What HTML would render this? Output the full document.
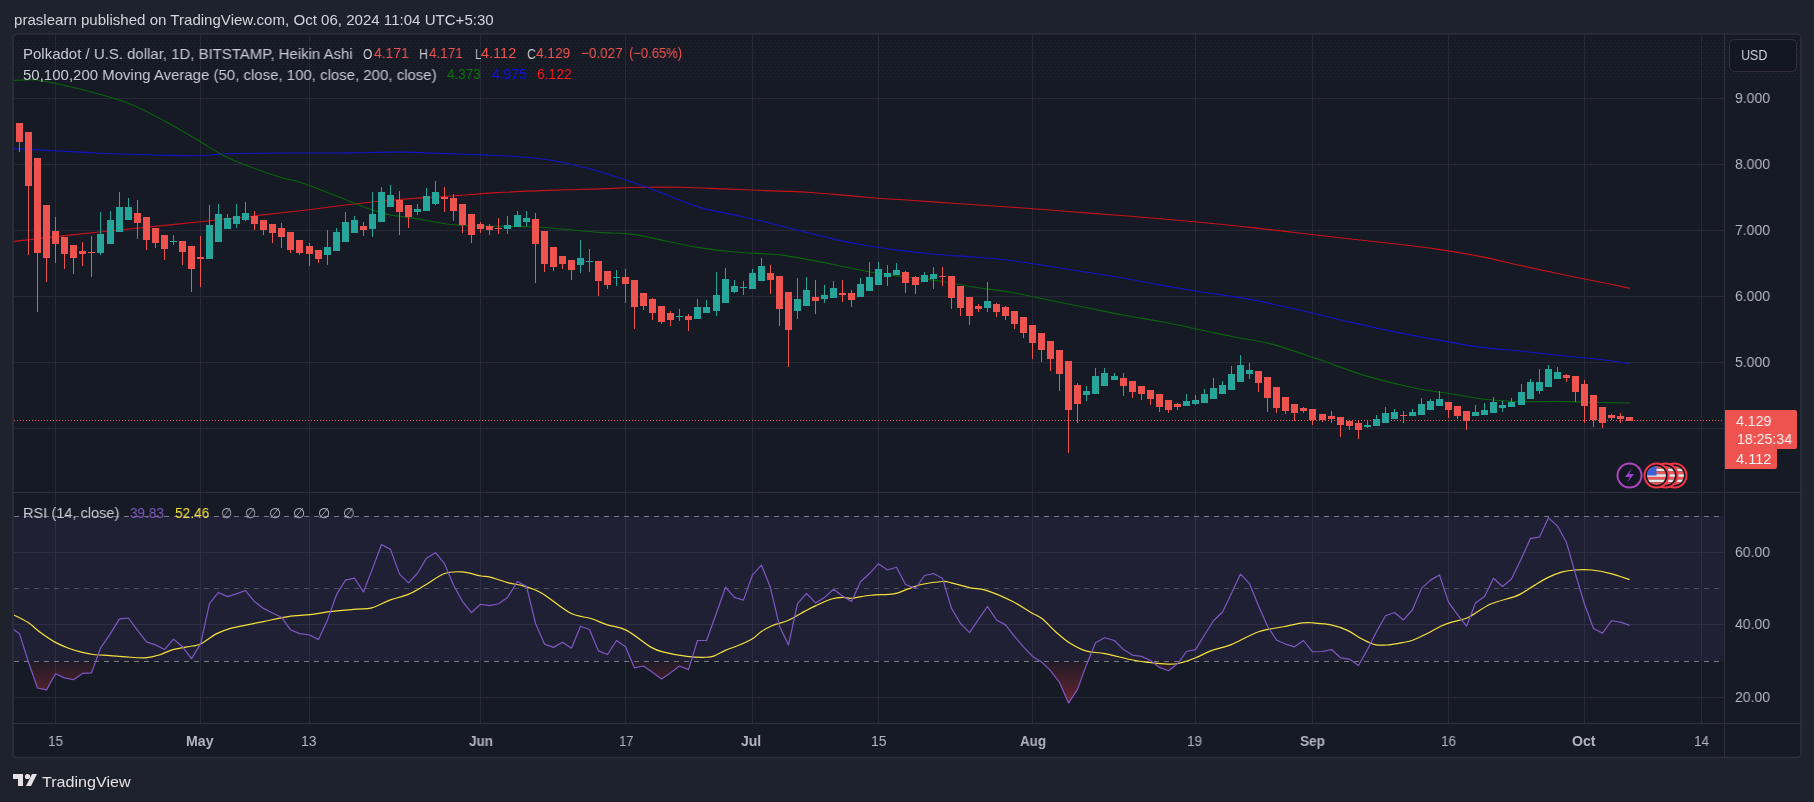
<!DOCTYPE html><html><head><meta charset="utf-8"><style>html,body{margin:0;padding:0;background:#1e222d;width:1814px;height:802px;overflow:hidden;}body{position:relative;font-family:"Liberation Sans",sans-serif;}.t{position:absolute;white-space:pre;line-height:1;transform-origin:0 0;will-change:transform;}svg{position:absolute;left:0;top:0;}</style></head><body><svg width="1814" height="802" viewBox="0 0 1814 802"><defs><clipPath id="mainclip"><rect x="14" y="35" width="1710" height="457"/></clipPath><clipPath id="rsiclip"><rect x="14" y="493" width="1710" height="230"/></clipPath><pattern id="dotp" width="4" height="6" patternUnits="userSpaceOnUse"><rect x="1" y="1" width="1" height="1" fill="#2a2d3b"/><rect x="3" y="4" width="1" height="1" fill="#2a2d3b"/></pattern></defs><rect x="13" y="33" width="1789" height="725" rx="3" fill="#161a25"/><rect x="14" y="35" width="1787" height="45" fill="url(#dotp)" opacity="0.6"/><rect x="55" y="35" width="1" height="688" fill="#272a36"/><rect x="200" y="35" width="1" height="688" fill="#272a36"/><rect x="309" y="35" width="1" height="688" fill="#272a36"/><rect x="480" y="35" width="1" height="688" fill="#272a36"/><rect x="625" y="35" width="1" height="688" fill="#272a36"/><rect x="752" y="35" width="1" height="688" fill="#272a36"/><rect x="878" y="35" width="1" height="688" fill="#272a36"/><rect x="1032" y="35" width="1" height="688" fill="#272a36"/><rect x="1195" y="35" width="1" height="688" fill="#272a36"/><rect x="1312" y="35" width="1" height="688" fill="#272a36"/><rect x="1448" y="35" width="1" height="688" fill="#272a36"/><rect x="1584" y="35" width="1" height="688" fill="#272a36"/><rect x="1701" y="35" width="1" height="688" fill="#272a36"/><rect x="14" y="98" width="1710" height="1" fill="#272a36"/><rect x="14" y="164" width="1710" height="1" fill="#272a36"/><rect x="14" y="230" width="1710" height="1" fill="#272a36"/><rect x="14" y="296" width="1710" height="1" fill="#272a36"/><rect x="14" y="362" width="1710" height="1" fill="#272a36"/><rect x="14" y="428" width="1710" height="1" fill="#272a36"/><rect x="14" y="552" width="1710" height="1" fill="#272a36"/><rect x="14" y="624" width="1710" height="1" fill="#272a36"/><rect x="14" y="697" width="1710" height="1" fill="#272a36"/><rect x="14" y="516" width="1710" height="145" fill="#7e57c2" fill-opacity="0.1"/><line x1="14" y1="516.5" x2="1724" y2="516.5" stroke="#787b86" stroke-width="1" stroke-dasharray="5 5"/><line x1="14" y1="588.5" x2="1724" y2="588.5" stroke="#787b86" stroke-opacity="0.5" stroke-width="1" stroke-dasharray="5 5"/><line x1="14" y1="661.5" x2="1724" y2="661.5" stroke="#787b86" stroke-width="1" stroke-dasharray="5 5"/><g clip-path="url(#mainclip)" fill="none" stroke-width="1.1"><path d="M13.00,241.50 C27.33,239.92 68.17,235.25 99.00,232.00 C129.83,228.75 164.50,225.53 198.00,222.00 C231.50,218.47 274.73,213.72 300.00,210.80 C325.27,207.88 333.10,206.38 349.60,204.50 C366.10,202.62 382.47,200.88 399.00,199.50 C415.53,198.12 432.23,197.35 448.80,196.20 C465.37,195.05 481.87,193.57 498.40,192.60 C514.93,191.63 531.07,191.02 548.00,190.40 C564.93,189.78 584.45,189.42 600.00,188.90 C615.55,188.38 627.52,187.57 641.30,187.30 C655.08,187.03 668.92,187.03 682.70,187.30 C696.48,187.57 710.22,188.35 724.00,188.90 C737.78,189.45 751.62,190.05 765.40,190.60 C779.18,191.15 792.93,191.37 806.70,192.20 C820.47,193.03 835.60,194.55 848.00,195.60 C860.40,196.65 872.43,197.85 881.10,198.50 C889.77,199.15 887.52,198.67 900.00,199.50 C912.48,200.33 937.30,202.22 956.00,203.50 C974.70,204.78 993.48,205.87 1012.20,207.20 C1030.92,208.53 1049.60,210.07 1068.30,211.50 C1087.00,212.93 1102.45,214.00 1124.40,215.80 C1146.35,217.60 1179.50,220.42 1200.00,222.30 C1220.50,224.18 1231.60,225.40 1247.40,227.10 C1263.20,228.80 1279.00,230.68 1294.80,232.50 C1310.60,234.32 1326.40,236.22 1342.20,238.00 C1358.00,239.78 1373.80,241.35 1389.60,243.20 C1405.40,245.05 1421.93,246.90 1437.00,249.10 C1452.07,251.30 1465.77,253.60 1480.00,256.40 C1494.23,259.20 1508.27,262.80 1522.40,265.90 C1536.53,269.00 1550.67,272.07 1564.80,275.00 C1578.93,277.93 1596.35,281.27 1607.20,283.50 C1618.05,285.73 1626.12,287.58 1629.90,288.40" stroke="#c8121a"/><path d="M13.00,148.60 C19.10,148.92 35.27,149.73 49.60,150.50 C63.93,151.27 82.43,152.50 99.00,153.20 C115.57,153.90 132.50,154.28 149.00,154.70 C165.50,155.12 184.25,155.90 198.00,155.70 C211.75,155.50 214.50,153.95 231.50,153.50 C248.50,153.05 280.32,153.10 300.00,153.00 C319.68,152.90 333.10,153.05 349.60,152.90 C366.10,152.75 382.47,151.98 399.00,152.10 C415.53,152.22 434.98,153.13 448.80,153.60 C462.62,154.07 470.87,154.42 481.90,154.90 C492.93,155.38 503.98,155.68 515.00,156.50 C526.02,157.32 538.35,158.42 548.00,159.80 C557.65,161.18 564.23,162.82 572.90,164.80 C581.57,166.78 589.98,168.78 600.00,171.70 C610.02,174.62 622.00,178.47 633.00,182.30 C644.00,186.13 654.97,190.57 666.00,194.70 C677.03,198.83 688.15,203.78 699.20,207.10 C710.25,210.42 721.27,212.12 732.30,214.60 C743.33,217.08 754.38,219.38 765.40,222.00 C776.42,224.62 787.38,227.53 798.40,230.30 C809.42,233.07 820.47,236.12 831.50,238.60 C842.53,241.08 853.18,243.23 864.60,245.20 C876.02,247.17 887.87,248.85 900.00,250.40 C912.13,251.95 924.93,253.40 937.40,254.50 C949.87,255.60 962.33,255.97 974.80,257.00 C987.27,258.03 999.73,259.15 1012.20,260.70 C1024.67,262.25 1037.13,264.37 1049.60,266.30 C1062.07,268.23 1074.53,270.30 1087.00,272.30 C1099.47,274.30 1111.93,276.12 1124.40,278.30 C1136.87,280.48 1149.20,283.15 1161.80,285.40 C1174.40,287.65 1185.73,289.55 1200.00,291.80 C1214.27,294.05 1231.60,296.03 1247.40,298.90 C1263.20,301.77 1279.00,305.45 1294.80,309.00 C1310.60,312.55 1326.40,316.55 1342.20,320.20 C1358.00,323.85 1373.80,327.62 1389.60,330.90 C1405.40,334.18 1421.93,337.20 1437.00,339.90 C1452.07,342.60 1465.77,345.20 1480.00,347.10 C1494.23,349.00 1508.27,349.82 1522.40,351.30 C1536.53,352.78 1550.67,354.52 1564.80,356.00 C1578.93,357.48 1596.35,358.87 1607.20,360.20 C1618.05,361.53 1626.12,363.37 1629.90,364.00" stroke="#1414c4"/><path d="M13.00,80.40 C16.33,80.27 28.33,79.55 33.00,79.60 C37.67,79.65 35.50,79.68 41.00,80.70 C46.50,81.72 56.33,83.48 66.00,85.70 C75.67,87.92 88.00,90.83 99.00,94.00 C110.00,97.17 121.00,100.15 132.00,104.70 C143.00,109.25 154.00,115.37 165.00,121.30 C176.00,127.23 188.33,134.65 198.00,140.30 C207.67,145.95 214.67,150.92 223.00,155.20 C231.33,159.48 238.33,162.28 248.00,166.00 C257.67,169.72 272.33,174.80 281.00,177.50 C289.67,180.20 291.33,179.35 300.00,182.20 C308.67,185.05 322.00,190.33 333.00,194.60 C344.00,198.87 356.90,204.50 366.00,207.80 C375.10,211.10 379.30,212.60 387.60,214.40 C395.90,216.20 405.60,216.95 415.80,218.60 C426.00,220.25 438.10,223.07 448.80,224.30 C459.50,225.53 466.22,225.58 480.00,226.00 C493.78,226.42 517.40,226.25 531.50,226.80 C545.60,227.35 553.18,228.37 564.60,229.30 C576.02,230.23 588.60,231.55 600.00,232.40 C611.40,233.25 622.00,232.97 633.00,234.40 C644.00,235.83 654.97,238.80 666.00,241.00 C677.03,243.20 688.15,245.80 699.20,247.60 C710.25,249.40 721.27,250.75 732.30,251.80 C743.33,252.85 757.13,253.35 765.40,253.90 C773.67,254.45 773.63,253.93 781.90,255.10 C790.17,256.27 803.98,258.83 815.00,260.90 C826.02,262.97 838.35,265.57 848.00,267.50 C857.65,269.43 864.23,271.03 872.90,272.50 C881.57,273.97 889.25,274.93 900.00,276.30 C910.75,277.67 924.93,278.87 937.40,280.70 C949.87,282.53 962.33,285.33 974.80,287.30 C987.27,289.27 999.73,290.33 1012.20,292.50 C1024.67,294.67 1037.13,297.75 1049.60,300.30 C1062.07,302.85 1074.53,305.30 1087.00,307.80 C1099.47,310.30 1111.93,312.97 1124.40,315.30 C1136.87,317.63 1149.20,319.40 1161.80,321.80 C1174.40,324.20 1187.72,327.12 1200.00,329.70 C1212.28,332.28 1223.67,334.93 1235.50,337.30 C1247.33,339.67 1257.17,340.23 1271.00,343.90 C1284.83,347.57 1302.68,353.97 1318.50,359.30 C1334.32,364.63 1350.10,371.17 1365.90,375.90 C1381.70,380.63 1397.50,384.47 1413.30,387.70 C1429.10,390.93 1448.85,393.37 1460.70,395.30 C1472.55,397.23 1474.12,398.25 1484.40,399.30 C1494.68,400.35 1509.00,401.22 1522.40,401.60 C1535.80,401.98 1550.67,401.43 1564.80,401.60 C1578.93,401.77 1596.35,402.37 1607.20,402.60 C1618.05,402.83 1626.12,402.93 1629.90,403.00" stroke="#0a650c"/></g><line x1="14" y1="420.5" x2="1726" y2="420.5" stroke="#ef5350" stroke-width="1" stroke-dasharray="1 2"/><g clip-path="url(#mainclip)"><rect x="19" y="123" width="1" height="29" fill="#ef5350"/><rect x="16" y="123" width="7" height="19" fill="#ef5350"/><rect x="28" y="132" width="1" height="123" fill="#ef5350"/><rect x="25" y="132" width="7" height="54" fill="#ef5350"/><rect x="37" y="158" width="1" height="154" fill="#ef5350"/><rect x="34" y="158" width="7" height="95" fill="#ef5350"/><rect x="46" y="205" width="1" height="77" fill="#ef5350"/><rect x="43" y="205" width="7" height="53" fill="#ef5350"/><rect x="55" y="217" width="1" height="46" fill="#ef5350"/><rect x="52" y="231" width="7" height="13" fill="#ef5350"/><rect x="64" y="237" width="1" height="32" fill="#ef5350"/><rect x="61" y="237" width="7" height="17" fill="#ef5350"/><rect x="73" y="245" width="1" height="29" fill="#ef5350"/><rect x="70" y="245" width="7" height="13" fill="#ef5350"/><rect x="82" y="242" width="1" height="24" fill="#ef5350"/><rect x="79" y="251" width="7" height="3" fill="#ef5350"/><rect x="91" y="236" width="1" height="41" fill="#ef5350"/><rect x="88" y="252" width="7" height="1" fill="#ef5350"/><rect x="100" y="212" width="1" height="43" fill="#26a69a"/><rect x="97" y="234" width="7" height="19" fill="#26a69a"/><rect x="110" y="211" width="1" height="33" fill="#26a69a"/><rect x="107" y="220" width="7" height="24" fill="#26a69a"/><rect x="119" y="192" width="1" height="40" fill="#26a69a"/><rect x="116" y="207" width="7" height="25" fill="#26a69a"/><rect x="128" y="198" width="1" height="22" fill="#26a69a"/><rect x="125" y="207" width="7" height="13" fill="#26a69a"/><rect x="137" y="200" width="1" height="39" fill="#ef5350"/><rect x="134" y="213" width="7" height="10" fill="#ef5350"/><rect x="146" y="217" width="1" height="33" fill="#ef5350"/><rect x="143" y="217" width="7" height="23" fill="#ef5350"/><rect x="155" y="228" width="1" height="20" fill="#ef5350"/><rect x="152" y="228" width="7" height="15" fill="#ef5350"/><rect x="164" y="235" width="1" height="25" fill="#ef5350"/><rect x="161" y="235" width="7" height="14" fill="#ef5350"/><rect x="173" y="235" width="1" height="10" fill="#26a69a"/><rect x="170" y="241" width="7" height="1" fill="#26a69a"/><rect x="182" y="241" width="1" height="24" fill="#ef5350"/><rect x="179" y="241" width="7" height="11" fill="#ef5350"/><rect x="191" y="246" width="1" height="46" fill="#ef5350"/><rect x="188" y="246" width="7" height="23" fill="#ef5350"/><rect x="200" y="236" width="1" height="51" fill="#ef5350"/><rect x="197" y="257" width="7" height="2" fill="#ef5350"/><rect x="209" y="205" width="1" height="54" fill="#26a69a"/><rect x="206" y="225" width="7" height="34" fill="#26a69a"/><rect x="218" y="204" width="1" height="38" fill="#26a69a"/><rect x="215" y="214" width="7" height="28" fill="#26a69a"/><rect x="227" y="214" width="1" height="15" fill="#26a69a"/><rect x="224" y="218" width="7" height="11" fill="#26a69a"/><rect x="236" y="204" width="1" height="24" fill="#26a69a"/><rect x="233" y="216" width="7" height="8" fill="#26a69a"/><rect x="245" y="202" width="1" height="19" fill="#26a69a"/><rect x="242" y="213" width="7" height="7" fill="#26a69a"/><rect x="254" y="211" width="1" height="19" fill="#ef5350"/><rect x="251" y="216" width="7" height="8" fill="#ef5350"/><rect x="263" y="220" width="1" height="15" fill="#ef5350"/><rect x="260" y="220" width="7" height="10" fill="#ef5350"/><rect x="272" y="224" width="1" height="19" fill="#ef5350"/><rect x="269" y="224" width="7" height="9" fill="#ef5350"/><rect x="281" y="223" width="1" height="25" fill="#ef5350"/><rect x="278" y="228" width="7" height="9" fill="#ef5350"/><rect x="290" y="232" width="1" height="21" fill="#ef5350"/><rect x="287" y="232" width="7" height="18" fill="#ef5350"/><rect x="299" y="240" width="1" height="15" fill="#ef5350"/><rect x="296" y="240" width="7" height="13" fill="#ef5350"/><rect x="309" y="243" width="1" height="23" fill="#ef5350"/><rect x="306" y="246" width="7" height="8" fill="#ef5350"/><rect x="318" y="250" width="1" height="13" fill="#ef5350"/><rect x="315" y="250" width="7" height="9" fill="#ef5350"/><rect x="327" y="230" width="1" height="35" fill="#26a69a"/><rect x="324" y="247" width="7" height="8" fill="#26a69a"/><rect x="336" y="228" width="1" height="23" fill="#26a69a"/><rect x="333" y="232" width="7" height="19" fill="#26a69a"/><rect x="345" y="212" width="1" height="30" fill="#26a69a"/><rect x="342" y="222" width="7" height="20" fill="#26a69a"/><rect x="354" y="216" width="1" height="17" fill="#26a69a"/><rect x="351" y="220" width="7" height="13" fill="#26a69a"/><rect x="363" y="222" width="1" height="14" fill="#ef5350"/><rect x="360" y="226" width="7" height="4" fill="#ef5350"/><rect x="372" y="192" width="1" height="45" fill="#26a69a"/><rect x="369" y="214" width="7" height="15" fill="#26a69a"/><rect x="381" y="187" width="1" height="35" fill="#26a69a"/><rect x="378" y="192" width="7" height="30" fill="#26a69a"/><rect x="390" y="185" width="1" height="22" fill="#26a69a"/><rect x="387" y="195" width="7" height="12" fill="#26a69a"/><rect x="399" y="191" width="1" height="44" fill="#ef5350"/><rect x="396" y="200" width="7" height="12" fill="#ef5350"/><rect x="408" y="205" width="1" height="23" fill="#ef5350"/><rect x="405" y="205" width="7" height="12" fill="#ef5350"/><rect x="417" y="204" width="1" height="11" fill="#26a69a"/><rect x="414" y="209" width="7" height="3" fill="#26a69a"/><rect x="426" y="188" width="1" height="23" fill="#26a69a"/><rect x="423" y="196" width="7" height="15" fill="#26a69a"/><rect x="435" y="181" width="1" height="24" fill="#26a69a"/><rect x="432" y="192" width="7" height="12" fill="#26a69a"/><rect x="444" y="187" width="1" height="25" fill="#ef5350"/><rect x="441" y="197" width="7" height="2" fill="#ef5350"/><rect x="453" y="194" width="1" height="27" fill="#ef5350"/><rect x="450" y="198" width="7" height="13" fill="#ef5350"/><rect x="462" y="204" width="1" height="29" fill="#ef5350"/><rect x="459" y="204" width="7" height="21" fill="#ef5350"/><rect x="471" y="214" width="1" height="29" fill="#ef5350"/><rect x="468" y="214" width="7" height="21" fill="#ef5350"/><rect x="480" y="222" width="1" height="11" fill="#ef5350"/><rect x="477" y="224" width="7" height="5" fill="#ef5350"/><rect x="489" y="224" width="1" height="11" fill="#ef5350"/><rect x="486" y="226" width="7" height="4" fill="#ef5350"/><rect x="498" y="218" width="1" height="16" fill="#ef5350"/><rect x="495" y="228" width="7" height="1" fill="#ef5350"/><rect x="507" y="216" width="1" height="18" fill="#26a69a"/><rect x="504" y="225" width="7" height="4" fill="#26a69a"/><rect x="517" y="211" width="1" height="16" fill="#26a69a"/><rect x="514" y="215" width="7" height="12" fill="#26a69a"/><rect x="526" y="211" width="1" height="15" fill="#26a69a"/><rect x="523" y="218" width="7" height="4" fill="#26a69a"/><rect x="535" y="213" width="1" height="70" fill="#ef5350"/><rect x="532" y="219" width="7" height="25" fill="#ef5350"/><rect x="544" y="231" width="1" height="41" fill="#ef5350"/><rect x="541" y="231" width="7" height="33" fill="#ef5350"/><rect x="553" y="247" width="1" height="24" fill="#ef5350"/><rect x="550" y="247" width="7" height="20" fill="#ef5350"/><rect x="562" y="256" width="1" height="13" fill="#ef5350"/><rect x="559" y="256" width="7" height="8" fill="#ef5350"/><rect x="571" y="260" width="1" height="20" fill="#ef5350"/><rect x="568" y="260" width="7" height="10" fill="#ef5350"/><rect x="580" y="240" width="1" height="33" fill="#26a69a"/><rect x="577" y="258" width="7" height="7" fill="#26a69a"/><rect x="589" y="249" width="1" height="23" fill="#26a69a"/><rect x="586" y="261" width="7" height="1" fill="#26a69a"/><rect x="598" y="261" width="1" height="35" fill="#ef5350"/><rect x="595" y="261" width="7" height="20" fill="#ef5350"/><rect x="607" y="271" width="1" height="18" fill="#ef5350"/><rect x="604" y="271" width="7" height="14" fill="#ef5350"/><rect x="616" y="270" width="1" height="16" fill="#26a69a"/><rect x="613" y="277" width="7" height="1" fill="#26a69a"/><rect x="625" y="269" width="1" height="34" fill="#ef5350"/><rect x="622" y="277" width="7" height="7" fill="#ef5350"/><rect x="634" y="280" width="1" height="49" fill="#ef5350"/><rect x="631" y="280" width="7" height="27" fill="#ef5350"/><rect x="643" y="293" width="1" height="17" fill="#ef5350"/><rect x="640" y="293" width="7" height="13" fill="#ef5350"/><rect x="652" y="298" width="1" height="22" fill="#ef5350"/><rect x="649" y="299" width="7" height="14" fill="#ef5350"/><rect x="661" y="306" width="1" height="18" fill="#ef5350"/><rect x="658" y="306" width="7" height="16" fill="#ef5350"/><rect x="670" y="311" width="1" height="15" fill="#ef5350"/><rect x="667" y="313" width="7" height="7" fill="#ef5350"/><rect x="679" y="309" width="1" height="12" fill="#26a69a"/><rect x="676" y="316" width="7" height="1" fill="#26a69a"/><rect x="688" y="314" width="1" height="17" fill="#ef5350"/><rect x="685" y="316" width="7" height="4" fill="#ef5350"/><rect x="697" y="299" width="1" height="20" fill="#26a69a"/><rect x="694" y="307" width="7" height="12" fill="#26a69a"/><rect x="706" y="300" width="1" height="13" fill="#26a69a"/><rect x="703" y="307" width="7" height="6" fill="#26a69a"/><rect x="716" y="272" width="1" height="44" fill="#26a69a"/><rect x="713" y="295" width="7" height="16" fill="#26a69a"/><rect x="725" y="268" width="1" height="35" fill="#26a69a"/><rect x="722" y="279" width="7" height="24" fill="#26a69a"/><rect x="734" y="280" width="1" height="13" fill="#26a69a"/><rect x="731" y="286" width="7" height="6" fill="#26a69a"/><rect x="743" y="281" width="1" height="14" fill="#26a69a"/><rect x="740" y="287" width="7" height="1" fill="#26a69a"/><rect x="752" y="269" width="1" height="20" fill="#26a69a"/><rect x="749" y="273" width="7" height="16" fill="#26a69a"/><rect x="761" y="258" width="1" height="23" fill="#26a69a"/><rect x="758" y="266" width="7" height="15" fill="#26a69a"/><rect x="770" y="265" width="1" height="29" fill="#ef5350"/><rect x="767" y="273" width="7" height="7" fill="#ef5350"/><rect x="779" y="276" width="1" height="50" fill="#ef5350"/><rect x="776" y="276" width="7" height="33" fill="#ef5350"/><rect x="788" y="292" width="1" height="75" fill="#ef5350"/><rect x="785" y="292" width="7" height="38" fill="#ef5350"/><rect x="797" y="278" width="1" height="41" fill="#26a69a"/><rect x="794" y="299" width="7" height="12" fill="#26a69a"/><rect x="806" y="277" width="1" height="29" fill="#26a69a"/><rect x="803" y="290" width="7" height="16" fill="#26a69a"/><rect x="815" y="280" width="1" height="34" fill="#ef5350"/><rect x="812" y="297" width="7" height="4" fill="#ef5350"/><rect x="824" y="285" width="1" height="18" fill="#26a69a"/><rect x="821" y="295" width="7" height="4" fill="#26a69a"/><rect x="833" y="281" width="1" height="17" fill="#26a69a"/><rect x="830" y="288" width="7" height="10" fill="#26a69a"/><rect x="842" y="280" width="1" height="22" fill="#ef5350"/><rect x="839" y="293" width="7" height="2" fill="#ef5350"/><rect x="851" y="290" width="1" height="17" fill="#ef5350"/><rect x="848" y="293" width="7" height="7" fill="#ef5350"/><rect x="860" y="278" width="1" height="19" fill="#26a69a"/><rect x="857" y="284" width="7" height="13" fill="#26a69a"/><rect x="869" y="262" width="1" height="29" fill="#26a69a"/><rect x="866" y="277" width="7" height="14" fill="#26a69a"/><rect x="878" y="262" width="1" height="23" fill="#26a69a"/><rect x="875" y="269" width="7" height="16" fill="#26a69a"/><rect x="887" y="265" width="1" height="21" fill="#26a69a"/><rect x="884" y="273" width="7" height="4" fill="#26a69a"/><rect x="896" y="263" width="1" height="12" fill="#26a69a"/><rect x="893" y="270" width="7" height="5" fill="#26a69a"/><rect x="905" y="271" width="1" height="22" fill="#ef5350"/><rect x="902" y="272" width="7" height="11" fill="#ef5350"/><rect x="915" y="276" width="1" height="18" fill="#ef5350"/><rect x="912" y="277" width="7" height="8" fill="#ef5350"/><rect x="924" y="272" width="1" height="10" fill="#26a69a"/><rect x="921" y="275" width="7" height="7" fill="#26a69a"/><rect x="933" y="267" width="1" height="22" fill="#26a69a"/><rect x="930" y="274" width="7" height="5" fill="#26a69a"/><rect x="942" y="267" width="1" height="19" fill="#ef5350"/><rect x="939" y="276" width="7" height="1" fill="#ef5350"/><rect x="951" y="276" width="1" height="33" fill="#ef5350"/><rect x="948" y="276" width="7" height="22" fill="#ef5350"/><rect x="960" y="286" width="1" height="30" fill="#ef5350"/><rect x="957" y="286" width="7" height="22" fill="#ef5350"/><rect x="969" y="297" width="1" height="28" fill="#ef5350"/><rect x="966" y="297" width="7" height="19" fill="#ef5350"/><rect x="978" y="304" width="1" height="8" fill="#ef5350"/><rect x="975" y="306" width="7" height="3" fill="#ef5350"/><rect x="987" y="282" width="1" height="30" fill="#26a69a"/><rect x="984" y="301" width="7" height="7" fill="#26a69a"/><rect x="996" y="303" width="1" height="14" fill="#ef5350"/><rect x="993" y="304" width="7" height="8" fill="#ef5350"/><rect x="1005" y="306" width="1" height="14" fill="#ef5350"/><rect x="1002" y="307" width="7" height="9" fill="#ef5350"/><rect x="1014" y="311" width="1" height="18" fill="#ef5350"/><rect x="1011" y="311" width="7" height="13" fill="#ef5350"/><rect x="1023" y="317" width="1" height="21" fill="#ef5350"/><rect x="1020" y="317" width="7" height="16" fill="#ef5350"/><rect x="1032" y="325" width="1" height="34" fill="#ef5350"/><rect x="1029" y="325" width="7" height="18" fill="#ef5350"/><rect x="1041" y="333" width="1" height="29" fill="#ef5350"/><rect x="1038" y="333" width="7" height="17" fill="#ef5350"/><rect x="1050" y="341" width="1" height="30" fill="#ef5350"/><rect x="1047" y="341" width="7" height="18" fill="#ef5350"/><rect x="1059" y="350" width="1" height="41" fill="#ef5350"/><rect x="1056" y="350" width="7" height="24" fill="#ef5350"/><rect x="1068" y="361" width="1" height="92" fill="#ef5350"/><rect x="1065" y="361" width="7" height="49" fill="#ef5350"/><rect x="1077" y="383" width="1" height="40" fill="#ef5350"/><rect x="1074" y="385" width="7" height="19" fill="#ef5350"/><rect x="1086" y="386" width="1" height="15" fill="#26a69a"/><rect x="1083" y="391" width="7" height="4" fill="#26a69a"/><rect x="1095" y="368" width="1" height="26" fill="#26a69a"/><rect x="1092" y="376" width="7" height="18" fill="#26a69a"/><rect x="1104" y="368" width="1" height="18" fill="#26a69a"/><rect x="1101" y="373" width="7" height="13" fill="#26a69a"/><rect x="1114" y="373" width="1" height="7" fill="#26a69a"/><rect x="1111" y="376" width="7" height="4" fill="#26a69a"/><rect x="1123" y="373" width="1" height="23" fill="#ef5350"/><rect x="1120" y="378" width="7" height="8" fill="#ef5350"/><rect x="1132" y="381" width="1" height="17" fill="#ef5350"/><rect x="1129" y="381" width="7" height="11" fill="#ef5350"/><rect x="1141" y="386" width="1" height="14" fill="#ef5350"/><rect x="1138" y="386" width="7" height="8" fill="#ef5350"/><rect x="1150" y="390" width="1" height="15" fill="#ef5350"/><rect x="1147" y="390" width="7" height="9" fill="#ef5350"/><rect x="1159" y="394" width="1" height="18" fill="#ef5350"/><rect x="1156" y="394" width="7" height="13" fill="#ef5350"/><rect x="1168" y="400" width="1" height="13" fill="#ef5350"/><rect x="1165" y="400" width="7" height="10" fill="#ef5350"/><rect x="1177" y="403" width="1" height="7" fill="#ef5350"/><rect x="1174" y="404" width="7" height="3" fill="#ef5350"/><rect x="1186" y="394" width="1" height="12" fill="#26a69a"/><rect x="1183" y="401" width="7" height="5" fill="#26a69a"/><rect x="1195" y="395" width="1" height="10" fill="#26a69a"/><rect x="1192" y="400" width="7" height="4" fill="#26a69a"/><rect x="1204" y="389" width="1" height="14" fill="#26a69a"/><rect x="1201" y="394" width="7" height="9" fill="#26a69a"/><rect x="1213" y="378" width="1" height="21" fill="#26a69a"/><rect x="1210" y="388" width="7" height="11" fill="#26a69a"/><rect x="1222" y="381" width="1" height="13" fill="#26a69a"/><rect x="1219" y="385" width="7" height="9" fill="#26a69a"/><rect x="1231" y="366" width="1" height="24" fill="#26a69a"/><rect x="1228" y="374" width="7" height="16" fill="#26a69a"/><rect x="1240" y="355" width="1" height="27" fill="#26a69a"/><rect x="1237" y="365" width="7" height="17" fill="#26a69a"/><rect x="1249" y="363" width="1" height="16" fill="#26a69a"/><rect x="1246" y="370" width="7" height="4" fill="#26a69a"/><rect x="1258" y="371" width="1" height="21" fill="#ef5350"/><rect x="1255" y="371" width="7" height="12" fill="#ef5350"/><rect x="1267" y="377" width="1" height="35" fill="#ef5350"/><rect x="1264" y="377" width="7" height="21" fill="#ef5350"/><rect x="1276" y="387" width="1" height="26" fill="#ef5350"/><rect x="1273" y="387" width="7" height="21" fill="#ef5350"/><rect x="1285" y="397" width="1" height="17" fill="#ef5350"/><rect x="1282" y="397" width="7" height="14" fill="#ef5350"/><rect x="1294" y="404" width="1" height="17" fill="#ef5350"/><rect x="1291" y="404" width="7" height="9" fill="#ef5350"/><rect x="1303" y="407" width="1" height="6" fill="#ef5350"/><rect x="1300" y="408" width="7" height="3" fill="#ef5350"/><rect x="1312" y="409" width="1" height="16" fill="#ef5350"/><rect x="1309" y="409" width="7" height="11" fill="#ef5350"/><rect x="1322" y="414" width="1" height="8" fill="#ef5350"/><rect x="1319" y="414" width="7" height="6" fill="#ef5350"/><rect x="1331" y="411" width="1" height="12" fill="#ef5350"/><rect x="1328" y="416" width="7" height="3" fill="#ef5350"/><rect x="1340" y="417" width="1" height="20" fill="#ef5350"/><rect x="1337" y="417" width="7" height="8" fill="#ef5350"/><rect x="1349" y="420" width="1" height="10" fill="#ef5350"/><rect x="1346" y="421" width="7" height="5" fill="#ef5350"/><rect x="1358" y="420" width="1" height="19" fill="#ef5350"/><rect x="1355" y="423" width="7" height="7" fill="#ef5350"/><rect x="1367" y="420" width="1" height="8" fill="#26a69a"/><rect x="1364" y="425" width="7" height="2" fill="#26a69a"/><rect x="1376" y="415" width="1" height="11" fill="#26a69a"/><rect x="1373" y="419" width="7" height="7" fill="#26a69a"/><rect x="1385" y="407" width="1" height="16" fill="#26a69a"/><rect x="1382" y="413" width="7" height="10" fill="#26a69a"/><rect x="1394" y="409" width="1" height="10" fill="#26a69a"/><rect x="1391" y="412" width="7" height="7" fill="#26a69a"/><rect x="1403" y="411" width="1" height="12" fill="#ef5350"/><rect x="1400" y="415" width="7" height="1" fill="#ef5350"/><rect x="1412" y="409" width="1" height="7" fill="#26a69a"/><rect x="1409" y="412" width="7" height="4" fill="#26a69a"/><rect x="1421" y="398" width="1" height="17" fill="#26a69a"/><rect x="1418" y="404" width="7" height="11" fill="#26a69a"/><rect x="1430" y="399" width="1" height="11" fill="#26a69a"/><rect x="1427" y="401" width="7" height="9" fill="#26a69a"/><rect x="1439" y="391" width="1" height="15" fill="#26a69a"/><rect x="1436" y="399" width="7" height="7" fill="#26a69a"/><rect x="1448" y="402" width="1" height="16" fill="#ef5350"/><rect x="1445" y="402" width="7" height="8" fill="#ef5350"/><rect x="1457" y="406" width="1" height="13" fill="#ef5350"/><rect x="1454" y="406" width="7" height="10" fill="#ef5350"/><rect x="1466" y="411" width="1" height="19" fill="#ef5350"/><rect x="1463" y="411" width="7" height="10" fill="#ef5350"/><rect x="1475" y="405" width="1" height="11" fill="#26a69a"/><rect x="1472" y="412" width="7" height="4" fill="#26a69a"/><rect x="1484" y="403" width="1" height="12" fill="#26a69a"/><rect x="1481" y="410" width="7" height="5" fill="#26a69a"/><rect x="1493" y="397" width="1" height="16" fill="#26a69a"/><rect x="1490" y="402" width="7" height="11" fill="#26a69a"/><rect x="1502" y="401" width="1" height="11" fill="#26a69a"/><rect x="1499" y="405" width="7" height="3" fill="#26a69a"/><rect x="1511" y="398" width="1" height="9" fill="#26a69a"/><rect x="1508" y="402" width="7" height="5" fill="#26a69a"/><rect x="1521" y="384" width="1" height="21" fill="#26a69a"/><rect x="1518" y="392" width="7" height="13" fill="#26a69a"/><rect x="1530" y="379" width="1" height="20" fill="#26a69a"/><rect x="1527" y="382" width="7" height="17" fill="#26a69a"/><rect x="1539" y="369" width="1" height="25" fill="#26a69a"/><rect x="1536" y="382" width="7" height="9" fill="#26a69a"/><rect x="1548" y="365" width="1" height="22" fill="#26a69a"/><rect x="1545" y="369" width="7" height="18" fill="#26a69a"/><rect x="1557" y="367" width="1" height="12" fill="#26a69a"/><rect x="1554" y="372" width="7" height="7" fill="#26a69a"/><rect x="1566" y="374" width="1" height="8" fill="#ef5350"/><rect x="1563" y="375" width="7" height="3" fill="#ef5350"/><rect x="1575" y="376" width="1" height="26" fill="#ef5350"/><rect x="1572" y="376" width="7" height="16" fill="#ef5350"/><rect x="1584" y="380" width="1" height="43" fill="#ef5350"/><rect x="1581" y="384" width="7" height="22" fill="#ef5350"/><rect x="1593" y="395" width="1" height="32" fill="#ef5350"/><rect x="1590" y="395" width="7" height="25" fill="#ef5350"/><rect x="1602" y="407" width="1" height="21" fill="#ef5350"/><rect x="1599" y="407" width="7" height="16" fill="#ef5350"/><rect x="1611" y="414" width="1" height="6" fill="#ef5350"/><rect x="1608" y="415" width="7" height="3" fill="#ef5350"/><rect x="1620" y="413" width="1" height="10" fill="#ef5350"/><rect x="1617" y="416" width="7" height="3" fill="#ef5350"/><rect x="1629" y="417" width="1" height="4" fill="#ef5350"/><rect x="1626" y="417" width="7" height="4" fill="#ef5350"/></g><defs><clipPath id="below30"><rect x="14" y="661" width="1710" height="62"/></clipPath><linearGradient id="osg" x1="0" y1="661" x2="0" y2="705" gradientUnits="userSpaceOnUse"><stop offset="0" stop-color="#f23645" stop-opacity="0.05"/><stop offset="1" stop-color="#f23645" stop-opacity="0.38"/></linearGradient></defs><g clip-path="url(#below30)"><path d="M13.00,661 L13.00,628.98 19.50,633.64 28.50,662.18 37.50,687.98 46.50,689.90 55.50,673.71 64.50,677.83 73.50,679.75 82.50,673.44 91.50,672.89 100.50,648.19 110.50,633.37 119.50,618.83 128.50,618.00 137.50,630.35 146.50,641.88 155.50,644.90 164.50,649.56 173.50,639.13 182.50,646.82 191.50,658.62 200.50,644.07 209.50,603.73 218.50,592.48 227.50,596.60 236.50,593.85 245.50,590.56 254.50,601.54 263.50,608.40 272.50,613.06 281.50,617.18 290.50,629.80 299.50,633.64 309.50,635.02 318.50,639.41 327.50,619.92 336.50,594.68 345.50,580.13 354.50,578.21 363.50,591.93 372.50,568.61 381.50,544.46 390.50,549.40 399.50,574.09 408.50,582.88 417.50,573.27 426.50,558.18 435.50,552.69 444.50,563.67 453.50,585.07 462.50,601.54 471.50,612.51 480.50,604.28 489.50,605.65 498.50,603.73 507.50,597.42 517.50,581.50 526.50,586.44 535.50,623.49 544.50,644.07 553.50,647.37 562.50,642.15 571.50,648.19 580.50,626.23 589.50,629.53 598.50,650.93 607.50,654.50 616.50,640.50 625.50,646.82 634.50,667.95 643.50,666.03 652.50,672.34 661.50,678.92 670.50,672.89 679.50,666.03 688.50,669.59 697.50,640.50 706.50,640.50 716.50,613.06 725.50,587.27 734.50,597.42 743.50,600.16 752.50,574.92 761.50,565.04 770.50,587.82 779.50,626.23 788.50,644.90 797.50,603.73 806.50,593.30 815.50,602.91 824.50,597.42 833.50,589.19 842.50,596.05 851.50,601.54 860.50,581.78 869.50,573.55 878.50,563.67 887.50,569.98 896.50,567.23 905.50,584.52 915.50,588.36 924.50,575.47 933.50,573.55 942.50,578.21 951.50,608.40 960.50,623.49 969.50,632.55 978.50,619.37 987.50,606.48 996.50,619.92 1005.50,624.86 1014.50,636.39 1023.50,646.82 1032.50,656.42 1041.50,661.91 1050.50,670.69 1059.50,682.49 1068.50,703.07 1077.50,689.35 1086.50,664.65 1095.50,642.70 1104.50,637.76 1114.50,640.50 1123.50,649.56 1132.50,655.05 1141.50,656.42 1150.50,660.54 1159.50,667.40 1168.50,670.69 1177.50,663.83 1186.50,651.48 1195.50,649.56 1204.50,635.02 1213.50,620.75 1222.50,611.96 1231.50,593.30 1240.50,574.09 1249.50,583.70 1258.50,605.65 1267.50,626.23 1276.50,639.96 1285.50,644.07 1294.50,646.82 1303.50,640.50 1312.50,651.76 1322.50,651.48 1331.50,649.56 1340.50,657.79 1349.50,659.17 1358.50,665.48 1367.50,649.56 1376.50,631.72 1385.50,615.81 1394.50,612.51 1403.50,619.92 1412.50,609.77 1421.50,588.36 1430.50,580.13 1439.50,574.92 1448.50,602.09 1457.50,614.71 1466.50,626.23 1475.50,602.91 1484.50,596.60 1493.50,578.21 1502.50,586.44 1511.50,579.03 1521.50,558.18 1530.50,538.42 1539.50,537.05 1548.50,517.84 1557.50,526.07 1566.50,542.54 1575.50,574.09 1584.50,604.28 1593.50,628.43 1602.50,633.10 1611.50,620.75 1620.50,622.12 1629.50,625.41 L1629.50,661 Z" fill="url(#osg)"/></g><g clip-path="url(#rsiclip)" fill="none" stroke-linejoin="round"><path d="M13.17,614.71 C15.55,615.94 22.78,619.05 27.44,622.12 C32.11,625.18 36.59,629.76 41.16,633.10 C45.74,636.43 50.31,639.64 54.88,642.15 C59.46,644.67 64.03,646.50 68.61,648.19 C73.18,649.88 78.21,651.25 82.33,652.31 C86.44,653.36 88.73,653.95 93.30,654.50 C97.88,655.05 104.28,655.19 109.77,655.60 C115.26,656.01 120.29,656.60 126.23,656.97 C132.18,657.34 139.96,658.11 145.44,657.79 C150.93,657.47 154.59,656.42 159.17,655.05 C163.74,653.68 167.40,651.07 172.89,649.56 C178.38,648.05 187.52,646.91 192.10,645.99 C196.67,645.08 196.21,646.13 200.33,644.07 C204.45,642.01 211.76,636.25 216.79,633.64 C221.83,631.04 225.48,629.89 230.52,628.43 C235.55,626.97 241.49,626.01 246.98,624.86 C252.47,623.72 256.59,622.94 263.45,621.57 C270.31,620.20 280.37,617.77 288.14,616.63 C295.92,615.49 303.24,615.53 310.10,614.71 C316.96,613.89 321.53,612.61 329.31,611.69 C337.08,610.78 349.66,609.86 356.75,609.22 C363.84,608.58 366.36,609.36 371.84,607.85 C377.33,606.34 383.51,602.45 389.68,600.16 C395.86,597.88 402.95,596.64 408.89,594.13 C414.84,591.61 419.41,588.50 425.36,585.07 C431.30,581.64 438.47,575.74 444.57,573.55 C450.67,571.35 455.85,571.49 461.95,571.90 C468.05,572.31 476.59,575.19 481.16,576.02 C485.74,576.84 484.82,575.70 489.40,576.84 C493.97,577.98 503.12,581.41 508.61,582.88 C514.09,584.34 518.21,584.57 522.33,585.62 C526.44,586.67 529.65,587.68 533.30,589.19 C536.96,590.70 538.11,590.70 544.28,594.68 C550.46,598.66 562.58,609.08 570.35,613.06 C578.13,617.04 584.76,616.58 590.93,618.55 C597.11,620.52 601.45,622.90 607.40,624.86 C613.34,626.83 619.29,626.60 626.61,630.35 C633.93,634.10 644.90,643.71 651.31,647.37 C657.71,651.02 659.08,650.80 665.03,652.31 C670.97,653.81 680.12,655.60 686.98,656.42 C693.84,657.24 701.62,657.34 706.19,657.24 C710.76,657.15 711.22,657.02 714.42,655.87 C717.63,654.73 720.83,652.35 725.40,650.38 C729.97,648.42 737.29,646.04 741.87,644.07 C746.44,642.11 749.64,640.64 752.84,638.58 C756.04,636.53 757.87,633.87 761.08,631.72 C764.28,629.57 767.48,627.61 772.05,625.69 C776.63,623.77 783.03,622.62 788.52,620.20 C794.01,617.77 800.41,613.57 804.98,611.14 C809.56,608.72 811.39,607.71 815.96,605.65 C820.53,603.59 827.85,600.16 832.43,598.79 C837.00,597.42 840.20,597.51 843.40,597.42 C846.60,597.33 847.06,598.61 851.64,598.24 C856.21,597.88 863.83,595.96 870.85,595.23 C877.86,594.49 887.62,594.86 893.72,593.85 C899.82,592.85 902.87,590.74 907.44,589.19 C912.02,587.63 915.22,585.80 921.16,584.52 C927.11,583.24 938.09,581.78 943.12,581.50 C948.15,581.23 946.78,581.82 951.35,582.88 C955.92,583.93 964.61,586.53 970.56,587.82 C976.51,589.10 980.16,588.36 987.03,590.56 C993.89,592.76 1004.41,597.33 1011.72,600.99 C1019.04,604.65 1025.90,609.59 1030.93,612.51 C1035.96,615.44 1037.79,615.35 1041.91,618.55 C1046.03,621.75 1051.06,627.70 1055.63,631.72 C1060.20,635.75 1064.32,639.50 1069.35,642.70 C1074.38,645.90 1079.87,649.10 1085.82,650.93 C1091.76,652.76 1097.25,652.17 1105.03,653.68 C1112.80,655.19 1125.15,658.53 1132.47,659.99 C1139.79,661.45 1142.99,661.77 1148.94,662.46 C1154.88,663.14 1163.11,663.97 1168.14,664.11 C1173.18,664.24 1174.55,664.33 1179.12,663.28 C1183.70,662.23 1190.10,659.94 1195.59,657.79 C1201.08,655.64 1206.11,652.58 1212.05,650.38 C1218.00,648.19 1223.49,647.73 1231.26,644.62 C1239.04,641.51 1250.01,634.70 1258.70,631.72 C1267.39,628.75 1276.08,628.25 1283.40,626.78 C1290.72,625.32 1297.58,623.58 1302.61,622.94 C1307.64,622.30 1308.86,622.62 1313.59,622.94 C1318.32,623.26 1325.33,623.63 1330.98,624.86 C1336.62,626.10 1342.41,628.06 1347.44,630.35 C1352.47,632.64 1356.59,636.21 1361.16,638.58 C1365.74,640.96 1370.31,643.57 1374.88,644.62 C1379.46,645.67 1384.03,645.22 1388.61,644.90 C1393.18,644.58 1398.21,643.52 1402.33,642.70 C1406.44,641.88 1408.73,641.69 1413.30,639.96 C1417.88,638.22 1425.20,634.56 1429.77,632.27 C1434.34,629.99 1437.09,627.93 1440.75,626.23 C1444.41,624.54 1447.15,623.58 1451.72,622.12 C1456.30,620.65 1461.79,620.43 1468.19,617.45 C1474.59,614.48 1482.82,607.62 1490.14,604.28 C1497.46,600.94 1507.07,599.11 1512.10,597.42 C1517.13,595.73 1516.67,596.09 1520.33,594.13 C1523.99,592.16 1529.48,588.36 1534.05,585.62 C1538.62,582.88 1543.20,579.90 1547.77,577.66 C1552.35,575.42 1556.92,573.45 1561.49,572.17 C1566.07,570.89 1570.18,570.34 1575.21,569.98 C1580.25,569.61 1585.73,569.38 1591.68,569.98 C1597.63,570.57 1604.58,571.94 1610.89,573.55 C1617.20,575.15 1626.44,578.58 1629.55,579.58" stroke="#f5e03c" stroke-width="1.2"/><polyline points="13.00,628.98 19.50,633.64 28.50,662.18 37.50,687.98 46.50,689.90 55.50,673.71 64.50,677.83 73.50,679.75 82.50,673.44 91.50,672.89 100.50,648.19 110.50,633.37 119.50,618.83 128.50,618.00 137.50,630.35 146.50,641.88 155.50,644.90 164.50,649.56 173.50,639.13 182.50,646.82 191.50,658.62 200.50,644.07 209.50,603.73 218.50,592.48 227.50,596.60 236.50,593.85 245.50,590.56 254.50,601.54 263.50,608.40 272.50,613.06 281.50,617.18 290.50,629.80 299.50,633.64 309.50,635.02 318.50,639.41 327.50,619.92 336.50,594.68 345.50,580.13 354.50,578.21 363.50,591.93 372.50,568.61 381.50,544.46 390.50,549.40 399.50,574.09 408.50,582.88 417.50,573.27 426.50,558.18 435.50,552.69 444.50,563.67 453.50,585.07 462.50,601.54 471.50,612.51 480.50,604.28 489.50,605.65 498.50,603.73 507.50,597.42 517.50,581.50 526.50,586.44 535.50,623.49 544.50,644.07 553.50,647.37 562.50,642.15 571.50,648.19 580.50,626.23 589.50,629.53 598.50,650.93 607.50,654.50 616.50,640.50 625.50,646.82 634.50,667.95 643.50,666.03 652.50,672.34 661.50,678.92 670.50,672.89 679.50,666.03 688.50,669.59 697.50,640.50 706.50,640.50 716.50,613.06 725.50,587.27 734.50,597.42 743.50,600.16 752.50,574.92 761.50,565.04 770.50,587.82 779.50,626.23 788.50,644.90 797.50,603.73 806.50,593.30 815.50,602.91 824.50,597.42 833.50,589.19 842.50,596.05 851.50,601.54 860.50,581.78 869.50,573.55 878.50,563.67 887.50,569.98 896.50,567.23 905.50,584.52 915.50,588.36 924.50,575.47 933.50,573.55 942.50,578.21 951.50,608.40 960.50,623.49 969.50,632.55 978.50,619.37 987.50,606.48 996.50,619.92 1005.50,624.86 1014.50,636.39 1023.50,646.82 1032.50,656.42 1041.50,661.91 1050.50,670.69 1059.50,682.49 1068.50,703.07 1077.50,689.35 1086.50,664.65 1095.50,642.70 1104.50,637.76 1114.50,640.50 1123.50,649.56 1132.50,655.05 1141.50,656.42 1150.50,660.54 1159.50,667.40 1168.50,670.69 1177.50,663.83 1186.50,651.48 1195.50,649.56 1204.50,635.02 1213.50,620.75 1222.50,611.96 1231.50,593.30 1240.50,574.09 1249.50,583.70 1258.50,605.65 1267.50,626.23 1276.50,639.96 1285.50,644.07 1294.50,646.82 1303.50,640.50 1312.50,651.76 1322.50,651.48 1331.50,649.56 1340.50,657.79 1349.50,659.17 1358.50,665.48 1367.50,649.56 1376.50,631.72 1385.50,615.81 1394.50,612.51 1403.50,619.92 1412.50,609.77 1421.50,588.36 1430.50,580.13 1439.50,574.92 1448.50,602.09 1457.50,614.71 1466.50,626.23 1475.50,602.91 1484.50,596.60 1493.50,578.21 1502.50,586.44 1511.50,579.03 1521.50,558.18 1530.50,538.42 1539.50,537.05 1548.50,517.84 1557.50,526.07 1566.50,542.54 1575.50,574.09 1584.50,604.28 1593.50,628.43 1602.50,633.10 1611.50,620.75 1620.50,622.12 1629.50,625.41" stroke="#7e57c2" stroke-width="1.2"/></g><rect x="13" y="492" width="1788" height="1" fill="#2e313c"/><rect x="13" y="723" width="1788" height="1" fill="#2e313c"/><rect x="1724" y="33" width="1" height="724" fill="#2e313c"/><rect x="13" y="34" width="1788" height="723.5" rx="3.5" fill="none" stroke="#2e313c" stroke-width="1.6"/><rect x="1729.5" y="39.5" width="67" height="32" rx="5" fill="#131722" stroke="#34303f" stroke-width="1"/><path d="M1725,410 H1795 Q1797,410 1797,412 V447 Q1797,449 1795,449 H1777 V467 Q1777,469 1775,469 H1725 Z" fill="#ef5350"/><circle cx="1629.5" cy="475.5" r="12" fill="#131722" stroke="#ab47bc" stroke-width="2"/><path d="M1632,468 L1625,477 H1630 L1627,483 L1634,474 H1629 Z" fill="#9c3fd0"/><circle cx="1674.5" cy="475.5" r="12" fill="#131722" stroke="#f23645" stroke-width="2"/><clipPath id="fc1674"><circle cx="1674.5" cy="475.5" r="9.5"/></clipPath><g clip-path="url(#fc1674)"><rect x="1664.5" y="466.0" width="20" height="2.72" fill="#f05454"/><rect x="1664.5" y="468.7" width="20" height="2.72" fill="#e8e8e8"/><rect x="1664.5" y="471.4" width="20" height="2.72" fill="#f05454"/><rect x="1664.5" y="474.2" width="20" height="2.72" fill="#e8e8e8"/><rect x="1664.5" y="476.9" width="20" height="2.72" fill="#f05454"/><rect x="1664.5" y="479.6" width="20" height="2.72" fill="#e8e8e8"/><rect x="1664.5" y="482.3" width="20" height="2.72" fill="#f05454"/><rect x="1664.5" y="466" width="10" height="9.5" fill="#3d5fd6"/></g><circle cx="1665.5" cy="475.5" r="12" fill="#131722" stroke="#f23645" stroke-width="2"/><clipPath id="fc1665"><circle cx="1665.5" cy="475.5" r="9.5"/></clipPath><g clip-path="url(#fc1665)"><rect x="1655.5" y="466.0" width="20" height="2.72" fill="#f05454"/><rect x="1655.5" y="468.7" width="20" height="2.72" fill="#e8e8e8"/><rect x="1655.5" y="471.4" width="20" height="2.72" fill="#f05454"/><rect x="1655.5" y="474.2" width="20" height="2.72" fill="#e8e8e8"/><rect x="1655.5" y="476.9" width="20" height="2.72" fill="#f05454"/><rect x="1655.5" y="479.6" width="20" height="2.72" fill="#e8e8e8"/><rect x="1655.5" y="482.3" width="20" height="2.72" fill="#f05454"/><rect x="1655.5" y="466" width="10" height="9.5" fill="#3d5fd6"/></g><circle cx="1656.5" cy="475.5" r="12" fill="#131722" stroke="#f23645" stroke-width="2"/><clipPath id="fc1656"><circle cx="1656.5" cy="475.5" r="9.5"/></clipPath><g clip-path="url(#fc1656)"><rect x="1646.5" y="466.0" width="20" height="2.72" fill="#f05454"/><rect x="1646.5" y="468.7" width="20" height="2.72" fill="#e8e8e8"/><rect x="1646.5" y="471.4" width="20" height="2.72" fill="#f05454"/><rect x="1646.5" y="474.2" width="20" height="2.72" fill="#e8e8e8"/><rect x="1646.5" y="476.9" width="20" height="2.72" fill="#f05454"/><rect x="1646.5" y="479.6" width="20" height="2.72" fill="#e8e8e8"/><rect x="1646.5" y="482.3" width="20" height="2.72" fill="#f05454"/><rect x="1646.5" y="466" width="10" height="9.5" fill="#3d5fd6"/></g><path d="M13,774 H23 V786 H18 V779 H13 Z" fill="#e6e1e6"/><circle cx="27.5" cy="776.5" r="2.6" fill="#e6e1e6"/><path d="M32,774 H37 L31,786 H26 Z" fill="#e6e1e6"/></svg><div class="t" style="left:13.50px;top:12.10px;font-size:15px;color:#d4d5da;font-weight:normal;transform:scaleX(1.0043)">praslearn published on TradingView.com, Oct 06, 2024 11:04 UTC+5:30</div><div class="t" style="left:23.20px;top:45.90px;font-size:15px;color:#c9ccd3;font-weight:normal;transform:scaleX(0.9978)">Polkadot / U.S. dollar, 1D, BITSTAMP, Heikin Ashi</div><div class="t" style="left:363.40px;top:45.90px;font-size:15px;color:#c9ccd3;font-weight:normal;transform:scaleX(0.7968)">O</div><div class="t" style="left:373.70px;top:46.33px;font-size:14.5px;color:#ef5350;font-weight:normal;transform:scaleX(0.9588)">4.171</div><div class="t" style="left:419.40px;top:45.90px;font-size:15px;color:#c9ccd3;font-weight:normal;transform:scaleX(0.8207)">H</div><div class="t" style="left:429.30px;top:46.33px;font-size:14.5px;color:#ef5350;font-weight:normal;transform:scaleX(0.9285)">4.171</div><div class="t" style="left:475.00px;top:45.90px;font-size:15px;color:#c9ccd3;font-weight:normal;transform:scaleX(0.7551)">L</div><div class="t" style="left:481.30px;top:46.33px;font-size:14.5px;color:#ef5350;font-weight:normal;transform:scaleX(0.9909)">4.112</div><div class="t" style="left:526.50px;top:45.90px;font-size:15px;color:#c9ccd3;font-weight:normal;transform:scaleX(0.8300)">C</div><div class="t" style="left:536.00px;top:46.33px;font-size:14.5px;color:#ef5350;font-weight:normal;transform:scaleX(0.9422)">4.129</div><div class="t" style="left:581.10px;top:46.33px;font-size:14.5px;color:#ef5350;font-weight:normal;transform:scaleX(0.9315)">−0.027</div><div class="t" style="left:628.70px;top:46.33px;font-size:14.5px;color:#ef5350;font-weight:normal;transform:scaleX(0.8945)">(−0.65%)</div><div class="t" style="left:23.20px;top:67.00px;font-size:15px;color:#c9ccd3;font-weight:normal;transform:scaleX(0.9987)">50,100,200 Moving Average (50, close, 100, close, 200, close)</div><div class="t" style="left:447.20px;top:67.43px;font-size:14.5px;color:#0a7a0a;font-weight:normal;transform:scaleX(0.9285)">4.373</div><div class="t" style="left:491.80px;top:67.43px;font-size:14.5px;color:#1010f0;font-weight:normal;transform:scaleX(0.9560)">4.975</div><div class="t" style="left:536.50px;top:67.43px;font-size:14.5px;color:#ff1a1a;font-weight:normal;transform:scaleX(0.9560)">6.122</div><div class="t" style="left:23.00px;top:505.10px;font-size:15px;color:#c9ccd3;font-weight:normal;transform:scaleX(0.9717)">RSI (14, close)</div><div class="t" style="left:129.90px;top:505.53px;font-size:14.5px;color:#7e57c2;font-weight:normal;transform:scaleX(0.9340)">39.83</div><div class="t" style="left:174.50px;top:505.53px;font-size:14.5px;color:#f5e03c;font-weight:normal;transform:scaleX(0.9450)">52.46</div><div class="t" style="left:221.00px;top:505.95px;font-size:14px;color:#b2b5be;font-weight:normal;transform:scaleX(0.9167)">∅</div><div class="t" style="left:245.00px;top:505.95px;font-size:14px;color:#b2b5be;font-weight:normal;transform:scaleX(0.9167)">∅</div><div class="t" style="left:269.00px;top:505.95px;font-size:14px;color:#b2b5be;font-weight:normal;transform:scaleX(0.9750)">∅</div><div class="t" style="left:293.00px;top:505.95px;font-size:14px;color:#b2b5be;font-weight:normal;transform:scaleX(1.0000)">∅</div><div class="t" style="left:318.00px;top:505.95px;font-size:14px;color:#b2b5be;font-weight:normal;transform:scaleX(1.0000)">∅</div><div class="t" style="left:342.50px;top:505.95px;font-size:14px;color:#b2b5be;font-weight:normal;transform:scaleX(0.9583)">∅</div><div class="t" style="left:1735.00px;top:90.93px;font-size:14.5px;color:#b2b5be;font-weight:normal;transform:scaleX(0.9643)">9.000</div><div class="t" style="left:1735.00px;top:156.93px;font-size:14.5px;color:#b2b5be;font-weight:normal;transform:scaleX(0.9643)">8.000</div><div class="t" style="left:1735.00px;top:222.93px;font-size:14.5px;color:#b2b5be;font-weight:normal;transform:scaleX(0.9643)">7.000</div><div class="t" style="left:1735.00px;top:288.93px;font-size:14.5px;color:#b2b5be;font-weight:normal;transform:scaleX(0.9643)">6.000</div><div class="t" style="left:1735.00px;top:354.93px;font-size:14.5px;color:#b2b5be;font-weight:normal;transform:scaleX(0.9643)">5.000</div><div class="t" style="left:1735.00px;top:544.93px;font-size:14.5px;color:#b2b5be;font-weight:normal;transform:scaleX(0.9643)">60.00</div><div class="t" style="left:1735.00px;top:616.93px;font-size:14.5px;color:#b2b5be;font-weight:normal;transform:scaleX(0.9643)">40.00</div><div class="t" style="left:1735.00px;top:689.93px;font-size:14.5px;color:#b2b5be;font-weight:normal;transform:scaleX(0.9643)">20.00</div><div class="t" style="left:1740.50px;top:47.93px;font-size:14.5px;color:#d1d4dc;font-weight:normal;transform:scaleX(0.8555)">USD</div><div class="t" style="left:1736.00px;top:413.73px;font-size:14.5px;color:#f2f2f2;font-weight:normal;transform:scaleX(0.9753)">4.129</div><div class="t" style="left:1737.00px;top:431.73px;font-size:14.5px;color:#f2f2f2;font-weight:normal;transform:scaleX(0.9743)">18:25:34</div><div class="t" style="left:1736.00px;top:451.73px;font-size:14.5px;color:#f2f2f2;font-weight:normal;transform:scaleX(1.0051)">4.112</div><div class="t" style="left:47.50px;top:734.45px;font-size:14px;color:#b2b5be;font-weight:normal;transform:scaleX(0.9629)">15</div><div class="t" style="left:186.00px;top:734.45px;font-size:14px;color:#b2b5be;font-weight:bold;transform:scaleX(1.0098)">May</div><div class="t" style="left:300.50px;top:734.45px;font-size:14px;color:#b2b5be;font-weight:normal;transform:scaleX(0.9950)">13</div><div class="t" style="left:468.50px;top:734.45px;font-size:14px;color:#b2b5be;font-weight:bold;transform:scaleX(0.9642)">Jun</div><div class="t" style="left:618.50px;top:734.45px;font-size:14px;color:#b2b5be;font-weight:normal;transform:scaleX(0.9308)">17</div><div class="t" style="left:741.00px;top:734.45px;font-size:14px;color:#b2b5be;font-weight:bold;transform:scaleX(0.9884)">Jul</div><div class="t" style="left:870.50px;top:734.45px;font-size:14px;color:#b2b5be;font-weight:normal;transform:scaleX(0.9950)">15</div><div class="t" style="left:1019.50px;top:734.45px;font-size:14px;color:#b2b5be;font-weight:bold;transform:scaleX(0.9552)">Aug</div><div class="t" style="left:1187.00px;top:734.45px;font-size:14px;color:#b2b5be;font-weight:normal;transform:scaleX(0.9629)">19</div><div class="t" style="left:1300.00px;top:734.45px;font-size:14px;color:#b2b5be;font-weight:bold;transform:scaleX(0.9732)">Sep</div><div class="t" style="left:1440.50px;top:734.45px;font-size:14px;color:#b2b5be;font-weight:normal;transform:scaleX(0.9629)">16</div><div class="t" style="left:1572.00px;top:734.45px;font-size:14px;color:#b2b5be;font-weight:bold;transform:scaleX(1.0067)">Oct</div><div class="t" style="left:1694.00px;top:734.45px;font-size:14px;color:#b2b5be;font-weight:normal;transform:scaleX(0.9629)">14</div><div class="t" style="left:41.80px;top:773.80px;font-size:15px;color:#e6e1e6;font-weight:normal;transform:scaleX(1.0733)">TradingView</div></body></html>
